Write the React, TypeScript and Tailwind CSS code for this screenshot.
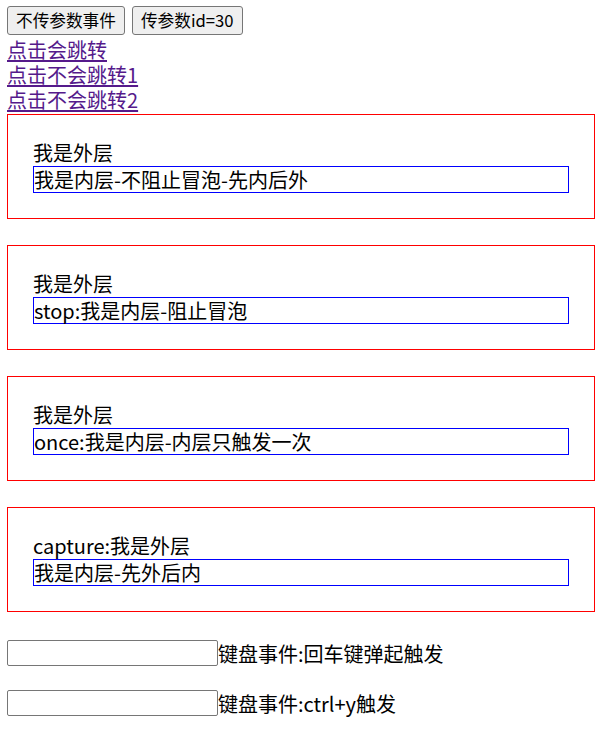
export default function App() {
  const boxes = [
    { outer: "我是外层", inner: "我是内层-不阻止冒泡-先内后外" },
    { outer: "我是外层", inner: "stop:我是内层-阻止冒泡" },
    { outer: "我是外层", inner: "once:我是内层-内层只触发一次" },
    { outer: "capture:我是外层", inner: "我是内层-先外后内" },
  ];

  return (
    <div className="min-h-[749px] bg-white pl-[7px] pt-[6px] text-[20px] leading-[25px] text-black font-['Noto_Sans_CJK_SC','Noto_Sans',sans-serif]">
      {/* buttons */}
      <div className="flex gap-[7px]">
        <button className="h-[29px] rounded-[3px] border border-[#767676] bg-[#efefef] px-[8px] text-[16.67px] leading-none text-black">
          不传参数事件
        </button>
        <button className="h-[29px] rounded-[3px] border border-[#767676] bg-[#efefef] px-[8px] text-[16.67px] leading-none text-black">
          传参数id=30
        </button>
      </div>

      {/* links */}
      <div className="mt-[2px] flex flex-col items-start">
        <a href="#" className="leading-[25px] text-[#551a8b] underline underline-offset-[2px]">
          点击会跳转
        </a>
        <a href="#" className="leading-[25px] text-[#551a8b] underline underline-offset-[2px]">
          点击不会跳转1
        </a>
        <a href="#" className="leading-[25px] text-[#551a8b] underline underline-offset-[2px]">
          点击不会跳转2
        </a>
      </div>

      {/* bubbling demos */}
      <div className="mt-[2px] flex flex-col gap-[26px]">
        {boxes.map((b, i) => (
          <div key={i} className="w-[588px] border border-[#ff0000] p-[25px]">
            <div className="leading-[26px]">{b.outer}</div>
            <div className="border border-[#0000ff]">{b.inner}</div>
          </div>
        ))}
      </div>

      {/* keyboard events */}
      <div className="mt-[28px] flex items-center">
        <input className="h-[26px] w-[211px] rounded-[2px] border border-[#767676] bg-white" />
        <span>键盘事件:回车键弹起触发</span>
      </div>
      <div className="mt-[24px] flex items-center">
        <input className="h-[26px] w-[211px] rounded-[2px] border border-[#767676] bg-white" />
        <span>键盘事件:ctrl+y触发</span>
      </div>
    </div>
  );
}
